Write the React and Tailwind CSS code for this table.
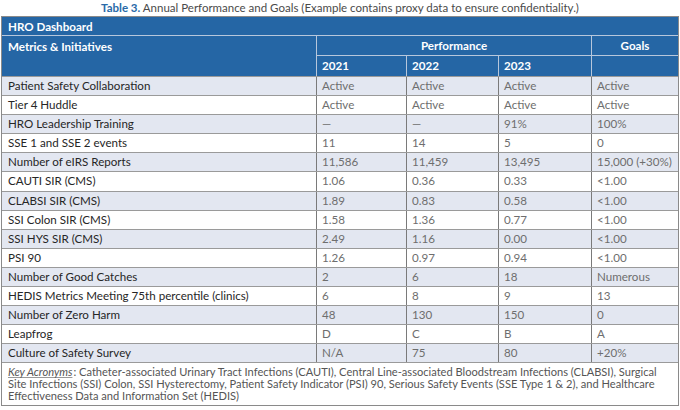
const rows = [
  ["Patient Safety Collaboration", "Active", "Active", "Active", "Active"],
  ["Tier 4 Huddle", "Active", "Active", "Active", "Active"],
  ["HRO Leadership Training", "—", "—", "91%", "100%"],
  ["SSE 1 and SSE 2 events", "11", "14", "5", "0"],
  ["Number of eIRS Reports", "11,586", "11,459", "13,495", "15,000 (+30%)"],
  ["CAUTI SIR (CMS)", "1.06", "0.36", "0.33", "<1.00"],
  ["CLABSI SIR (CMS)", "1.89", "0.83", "0.58", "<1.00"],
  ["SSI Colon SIR (CMS)", "1.58", "1.36", "0.77", "<1.00"],
  ["SSI HYS SIR (CMS)", "2.49", "1.16", "0.00", "<1.00"],
  ["PSI 90", "1.26", "0.97", "0.94", "<1.00"],
  ["Number of Good Catches", "2", "6", "18", "Numerous"],
  ["HEDIS Metrics Meeting 75th percentile (clinics)", "6", "8", "9", "13"],
  ["Number of Zero Harm", "48", "130", "150", "0"],
  ["Leapfrog", "D", "C", "B", "A"],
  ["Culture of Safety Survey", "N/A", "75", "80", "+20%"],
];

const cols = "grid grid-cols-[315px_90px_92px_93px_1fr]";

export default function App() {
  return (
    <div className="w-[680px] h-[410px] bg-white font-['Lato',sans-serif] text-[11.6px]">
      <p className="h-[16px] text-center text-[11.5px] leading-[15px] text-[#4a4a4a]">
        <span className="font-bold text-[#2a6aa8]">Table 3.</span> Annual Performance and Goals (Example contains proxy data to ensure confidentiality.)
      </p>
      <div className="mx-[1px] border border-[#8a8a8a]">
        <div className="h-[19px] bg-[#2566a5] px-[6px] font-bold text-white leading-[19px] border-b border-[#b7c7dc]">
          HRO Dashboard
        </div>
        <div className={`${cols} bg-[#2566a5] text-white font-bold`}>
          <div className="row-span-2 px-[6px] pt-[2px] border-r border-[#b7c7dc]">Metrics &amp; Initiatives</div>
          <div className="col-span-3 h-[20px] leading-[20px] text-center border-r border-b border-[#b7c7dc]">Performance</div>
          <div className="h-[20px] leading-[20px] text-center border-b border-[#b7c7dc]">Goals</div>
          <div className="h-[20px] leading-[20px] px-[5px] border-r border-[#b7c7dc]">2021</div>
          <div className="h-[20px] leading-[20px] px-[5px] border-r border-[#b7c7dc]">2022</div>
          <div className="h-[20px] leading-[20px] px-[5px] border-r border-[#b7c7dc]">2023</div>
          <div className="h-[20px]"></div>
        </div>
        {rows.map((r, i) => (
          <div
            key={r[0]}
            className={`${cols} h-[19.1px] leading-[18px] border-t border-[#9a9a9a] ${i % 2 === 0 ? "bg-[#e3e7f1]" : "bg-white"}`}
          >
            <div className="px-[6px] text-[#262626] border-r border-[#7a7a7a]">{r[0]}</div>
            {r.slice(1).map((v, j) => (
              <div
                key={j}
                className={`px-[5px] text-[#6e6e6e] ${j < 3 ? "border-r border-[#7a7a7a]" : ""}`}
              >
                {v}
              </div>
            ))}
          </div>
        ))}
        <div className="border-t border-[#9a9a9a] px-[6px] pt-[3px] pb-[3px] text-[11.1px] leading-[12px] text-[#555]">
          <span className="italic underline decoration-[#999] mr-[1px]">Key Acronyms</span>: Catheter-associated Urinary Tract Infections (CAUTI), Central Line-associated Bloodstream Infections (CLABSI), Surgical Site Infections (SSI) Colon, SSI Hysterectomy, Patient Safety Indicator (PSI) 90, Serious Safety Events (SSE Type 1 &amp; 2), and Healthcare Effectiveness Data and Information Set (HEDIS)
        </div>
      </div>
    </div>
  );
}
